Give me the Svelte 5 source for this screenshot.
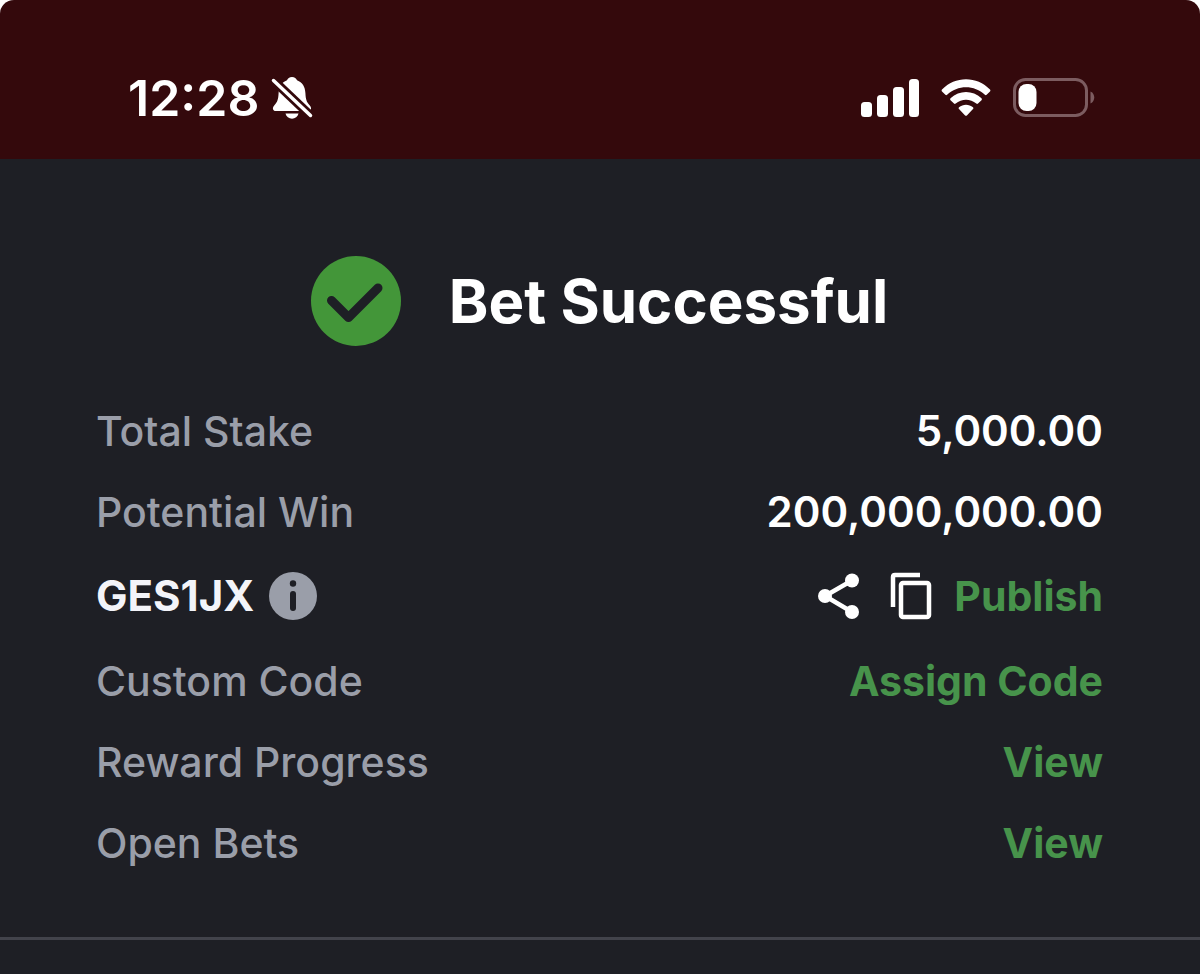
<script>
  const amounts = [
    { label: 'Total Stake', value: '5,000.00' },
    { label: 'Potential Win', value: '200,000,000.00' }
  ];
  const actions = [
    { label: 'Custom Code', action: 'Assign Code' },
    { label: 'Reward Progress', action: 'View' },
    { label: 'Open Bets', action: 'View' }
  ];
</script>

<div class="screen">
  <div class="top">
    <header class="status">
      <div class="clock">
        <time>12:28</time>
        <svg width="42" height="44" viewBox="0 0 42 44" aria-hidden="true">
          <path fill="#fff" d="M21 1c-2.600 0-4.300 1.300-5 3.200C10.500 6.400 8 10.500 7.600 17c-.3 6.500-1.200 9-4.200 12.200C1 31.700 1.500 35 5 35h32c3.500 0 4-3.300 1.600-5.800-3-3.200-3.900-5.700-4.200-12.200C34 10.500 31.500 6.400 26 4.200 25.300 2.300 23.600 1 21 1z" />
          <path fill="#fff" d="M14.500 37.500h13c-.8 3.300-3.400 5.200-6.500 5.200s-5.700-1.900-6.500-5.200z" />
          <path d="M-1 1L42 42" stroke="#34090c" stroke-width="9" />
          <path d="M2.500 4.500L39.500 39.500" stroke="#fff" stroke-width="3.500" stroke-linecap="round" />
        </svg>
      </div>
      <div class="signals">
        <svg width="58" height="38" viewBox="0 0 58 38" fill="#fff" aria-hidden="true">
          <rect x="0" y="23" width="11" height="15" rx="3.500" />
          <rect x="16" y="16" width="11" height="22" rx="3.500" />
          <rect x="32" y="8" width="11" height="30" rx="3.500" />
          <rect x="48" y="0" width="10" height="38" rx="3.500" />
        </svg>
        <svg width="50" height="38" viewBox="0 0 50 38" fill="#fff" aria-hidden="true">
          <path d="M1 10.500C14-3.300 36-3.300 49 10.500q.8 1 0 1.900l-3.400 3.400q-.8.700-1.700-.1C33.500 5.700 16.500 5.700 6.100 15.700q-.9.800-1.700.1L1 12.400q-.8-.9 0-1.900z" />
          <path d="M9.500 19.200C18.500 10.800 31.500 10.800 40.500 19.200q.9 1 0 2l-3.500 3.400q-.8.800-1.700 0C29.500 19.500 20.500 19.500 14.700 24.600q-.9.800-1.700 0L9.500 21.200q-.9-1 0-2z" />
          <path d="M18 28.200C22 24.800 28 24.800 32 28.200q1 .9 0 1.900l-6.100 6.300q-.9.900-1.800 0L18 30.100q-1-1 0-1.900z" />
        </svg>
        <svg width="82" height="40" viewBox="0 0 82 40" aria-hidden="true">
          <rect x="1.500" y="1.500" width="72" height="36" rx="11" fill="none" stroke="#7c5c60" stroke-width="3" />
          <path d="M77.500 13.500c5 2 5 10 0 12z" fill="#7c5c60" />
          <rect x="5.500" y="6" width="18" height="27" rx="8" fill="#fff" />
        </svg>
      </div>
    </header>
  </div>

  <main>
    <h1>
      <svg width="90" height="90" viewBox="0 0 90 90" aria-hidden="true">
        <circle cx="45" cy="45" r="45" fill="#439639" />
        <path d="M20.500 44.500L37.500 61.500L67 32" fill="none" stroke="#1e1f25" stroke-width="9" stroke-linecap="round" stroke-linejoin="round" />
      </svg>
      <span>Bet Successful</span>
    </h1>

    <dl>
      {#each amounts as row}
        <div class="row">
          <dt>{row.label}</dt>
          <dd>{row.value}</dd>
        </div>
      {/each}
      <div class="row booking">
        <dt class="code">
          GES1JX
          <button aria-label="Booking code information">
            <svg width="48" height="48" viewBox="0 0 48 48">
              <circle cx="24" cy="24" r="24" fill="#9a9ea9" />
              <circle cx="24" cy="11.500" r="3.200" fill="#1e1f25" />
              <path d="M24 22V36" stroke="#1e1f25" stroke-width="6" stroke-linecap="round" />
            </svg>
          </button>
        </dt>
        <dd class="tools">
          <button aria-label="Share">
            <svg width="42" height="48" viewBox="0 0 42 48">
              <path d="M34 8.500L7 24L34 40" fill="none" stroke="#fff" stroke-width="4.500" />
              <circle cx="34" cy="8.500" r="7" fill="#fff" />
              <circle cx="7" cy="24" r="7" fill="#fff" />
              <circle cx="34" cy="40" r="7" fill="#fff" />
            </svg>
          </button>
          <button aria-label="Copy">
            <svg width="42" height="48" viewBox="0 0 42 48" fill="none" stroke="#fff" stroke-width="4.500">
              <path d="M3 35V5q0-2 2-2H30" />
              <rect x="11" y="11" width="28" height="34" rx="2" />
            </svg>
          </button>
          <button class="link">Publish</button>
        </dd>
      </div>
      {#each actions as row}
        <div class="row">
          <dt>{row.label}</dt>
          <dd><button class="link">{row.action}</button></dd>
        </div>
      {/each}
    </dl>
  </main>
</div>

<style>
  :global(body) {
    margin: 0;
    background: #1e1f25;
  }

  .screen {
    font-family: Inter, 'Liberation Sans', sans-serif;
    color: #fff;
  }

  .top {
    background: #fff;
  }

  .status {
    display: flex;
    align-items: center;
    justify-content: space-between;
    padding: 68px 105px 31px 128px;
    background: #34090c;
    border-radius: 14px 14px 0 0;
  }

  .clock {
    display: flex;
    align-items: center;
    gap: 12px;
    font-size: 50px;
    line-height: 60px;
    font-weight: 600;
  }

  .signals {
    display: flex;
    align-items: center;
    gap: 22px;
  }

  svg {
    display: block;
    flex: none;
  }

  main {
    padding: 97px 97px 54px 96px;
    border-bottom: 3px solid #42434b;
  }

  h1 {
    display: flex;
    align-items: center;
    justify-content: center;
    gap: 48px;
    margin: 0;
    font-size: 60px;
    line-height: 90px;
    font-weight: 700;
  }

  dl {
    margin: 44px 0 0;
    font-size: 42px;
    line-height: 50px;
  }

  .row {
    display: flex;
    align-items: center;
    justify-content: space-between;
    min-height: 81px;
  }

  .booking {
    min-height: 88px;
  }

  dt {
    color: #9a9ea9;
    font-size: 41px;
    font-weight: 500;
  }

  dd {
    margin: 0;
    font-weight: 600;
  }

  .code {
    display: flex;
    align-items: center;
    gap: 15px;
    color: #f3f4f9;
    font-size: 42px;
    font-weight: 700;
  }

  .tools {
    display: flex;
    align-items: center;
  }

  .tools button + button {
    margin-left: 30px;
  }

  .tools button + .link {
    margin-left: 22px;
  }

  button {
    padding: 0;
    border: 0;
    background: none;
    color: inherit;
    font: inherit;
    cursor: pointer;
  }

  .link {
    color: #47934b;
    font-size: 41px;
    font-weight: 700;
  }
</style>
